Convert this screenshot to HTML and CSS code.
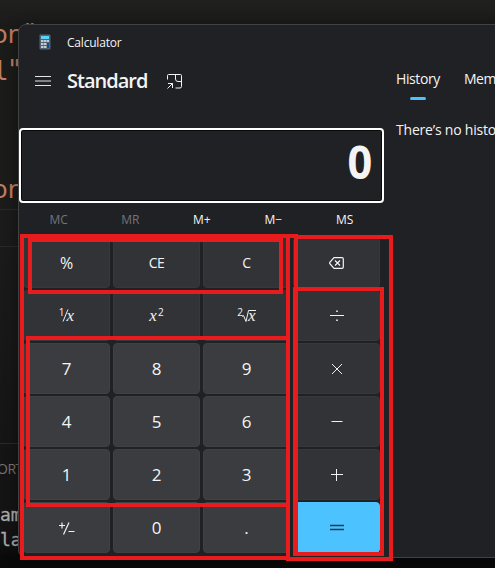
FILE: index.html
```html
<!DOCTYPE html>
<html lang="en">
<head>
<meta charset="utf-8">
<title>Calculator</title>
<link rel="stylesheet" href="styles.css">
</head>
<body>
<div class="desktop">
  <div class="editor">
    <span class="code s1">on<b>"</b></span>
    <span class="code s2">l<b>"</b></span>
    <span class="code s3">on</span>
    <span class="rule r1"></span>
    <span class="rule r2"></span>
    <span class="rule r3"></span>
    <span class="panel-tab">ORT</span>
    <span class="term t1">am</span>
    <span class="term t2">la</span>
  </div>
  <main class="window">
    <section class="calc">
      <header class="titlebar">
        <svg class="app-icon" width="12" height="16" viewBox="0 0 12 16"><rect x=".5" y=".5" width="11" height="15" rx="1" fill="#526473"/><rect x="2" y="2" width="8" height="3" fill="#55d5fa"/><g fill="#c5ccd1"><path d="M2 6h2.500v2H2zM5 6h2.500v2H5zM8 6h2v2H8zM2 9h2.500v2H2zM5 9h2.500v2H5zM2 12h2.500v2H2zM5 12h2.500v2H5z"/></g><path d="M8 9h2v5H8z" fill="#164c92"/></svg>
        <span>Calculator</span>
      </header>
      <div class="mode">
        <svg class="menu" width="16" height="12" viewBox="0 0 16 12" stroke="#e4e4e5"><path d="M0 1.500h16M0 6h16M0 10.500h16"/></svg>
        <h1>Standard</h1>
        <svg class="ontop" width="15" height="15" viewBox="0 0 15 15" fill="none" stroke="#f2f2f2"><path d="M.5 5.500V1.500Q.5.500 1.500.500H13.500Q14.500.500 14.500 1.500V12.500Q14.500 14 13 14H8.500M8.500.500V5Q8.500 7.500 11 7.500H14.500M.5 14.500 5.500 9.500M1 9.500H5.500V14"/></svg>
      </div>
      <div class="display"><span>0</span></div>
      <div class="memory"><span class="off">MC</span><span class="off">MR</span><span>M+</span><span>M−</span><span>MS</span></div>
      <div class="keys">
        <button class="pct">%</button>
        <button class="clear">CE</button>
        <button class="clear">C</button>
        <button><svg width="15" height="12" viewBox="0 0 15 12" fill="none" stroke="#f4f4f4" stroke-width="1.200"><path d="M5 .7H13Q14.300.7 14.300 2V10Q14.300 11.300 13 11.300H5L.7 6.500V5.500ZM6 3.500 11 8.500M11 3.500 6 8.500"/></svg></button>
        <button class="math"><span class="frac"><sup>1</sup><svg width="7" height="13" viewBox="0 0 7 13" stroke="#eee"><path d="M1 12.500 6 .5"/></svg><i>x</i></span></button>
        <button class="math"><span class="power"><i>x</i><sup>2</sup></span></button>
        <button class="math"><span class="root"><sup>2</sup><svg width="14" height="14" viewBox="0 0 14 14" fill="none" stroke="#eee"><path d="M0 7.500 1.500 6.500 4 12.500 6.500 1.500H14"/></svg><i>x</i></span></button>
        <button><svg width="14" height="12" viewBox="0 0 14 12" fill="#f2f2f2"><path d="M0 5h14v1H0zM6.200.5h1.600v1.600H6.200zM6.200 9.400h1.600v1.600H6.200z"/></svg></button>
        <button class="digit">7</button><button class="digit">8</button><button class="digit">9</button>
        <button><svg width="12" height="12" viewBox="0 0 12 12" stroke="#eee"><path d="M1 1 11 11M11 1 1 11"/></svg></button>
        <button class="digit">4</button><button class="digit">5</button><button class="digit">6</button>
        <button><svg width="12" height="12" viewBox="0 0 12 12" stroke="#f2f2f2"><path d="M.5 5.500H11.500"/></svg></button>
        <button class="digit">1</button><button class="digit">2</button><button class="digit">3</button>
        <button><svg width="12" height="12" viewBox="0 0 12 12" stroke="#f2f2f2"><path d="M0 5.500H12M5.500 0V12"/></svg></button>
        <button class="digit"><svg width="17" height="15" viewBox="0 0 17 15" fill="none" stroke="#f2f2f2" stroke-width="1.200"><path d="M1 4.500H7M4 1.500V7.500M5.500 13.500 11 1.500M10.500 10.500H16.500"/></svg></button>
        <button class="digit">0</button><button class="digit">.</button>
        <button class="equals"><svg width="14" height="7" viewBox="0 0 14 7" stroke="#173f53" stroke-width="1.300"><path d="M0 1.500H14M0 5.500H14"/></svg></button>
      </div>
    </section>
    <aside class="side">
      <nav class="tabs"><span class="active">History</span><span>Memory</span></nav>
      <p>There’s no history yet.</p>
    </aside>
  </main>
  <svg class="marks" width="495" height="568" viewBox="0 0 495 568" fill="none" stroke="#e81c1c" stroke-width="4">
    <path d="M298 236H22V558H288V236"/>
    <path d="M30 240H281V292H30Z"/>
    <path d="M28 338H288V505H28Z"/>
    <path d="M296 287V237H391V559H286"/>
    <path d="M295 289H382V554H295"/>
    <path d="M295.500 287V556" stroke-width="5"/>
  </svg>
</div>
</body>
</html>
```
FILE: styles.css
```css
* { box-sizing: border-box; }
body { margin: 0; }
.desktop {
  position: relative;
  width: 495px;
  height: 568px;
  overflow: hidden;
  padding: 24px 0 0 18px;
  background: linear-gradient(#202020 0, #1b1b1a 24px, #1b1b1b 220px, #151515 440px, #131313 540px, #090909 558px);
  font-family: "Open Sans", "Noto Sans", sans-serif;
  color: #f4f4f4;
}
.editor { position: absolute; inset: 0; white-space: pre; }
.editor > * { position: absolute; }
.code { color: #bf7c61; font: 26px/30px "Noto Sans", sans-serif; }
.code b { position: relative; font-weight: 400; }
.s1 { left: -8px; top: 18px; }
.s1 b { left: 1px; top: -2px; }
.s2 { left: -7px; top: 56px; font-family: "DejaVu Sans Mono", monospace; letter-spacing: -1px; }
.s2 b { left: -1px; top: -1px; }
.s3 { left: -8px; top: 173px; }
.rule { left: 0; width: 18px; height: 1px; background: #292929; }
.r1 { top: 209px; }
.r2 { top: 246px; }
.r3 { top: 443px; }
.panel-tab { left: -3px; top: 459px; color: #77736d; font-size: 14px; line-height: 19px; letter-spacing: -.5px; }
.term { left: 0; color: #aaa; font: 18px/24px "DejaVu Sans Mono", monospace; -webkit-text-stroke: .3px #aaa; }
.t1 { top: 503px; }
.t2 { top: 528px; }
.window {
  position: relative;
  display: flex;
  width: 600px;
  height: 534px;
  border: 1px solid #424244;
  border-radius: 8px;
  background: #202125;
  box-shadow: 0 2px 14px rgba(0, 0, 0, .4);
}
.calc { width: 365px; flex: none; }
.titlebar {
  display: flex;
  align-items: center;
  height: 34px;
  padding-left: 20px;
  gap: 16px;
  font-size: 12px;
  letter-spacing: -.2px;
}
.mode { display: flex; align-items: center; height: 44px; padding-left: 16px; }
h1 { margin: 0 0 0 16px; width: 100px; font-size: 20px; line-height: 28px; font-weight: 650; letter-spacing: -1px; white-space: nowrap; }
.display {
  display: flex;
  align-items: center;
  justify-content: flex-end;
  height: 75px;
  margin-top: 25px;
  padding-right: 10px;
  padding-bottom: 9px;
  border: 2px solid #fff;
  border-radius: 4px;
  box-shadow: inset 0 0 0 1px #08090b;
  font-size: 46px;
  font-weight: 700;
}
.display span { transform: scaleX(.94); transform-origin: right; }
.memory {
  display: grid;
  grid-template-columns: repeat(5, 71.500px);
  height: 34px;
  padding: 0 0 2px 4px;
  align-items: center;
  text-align: center;
  font-size: 12px;
}
.off { color: #737478; }
.keys {
  display: grid;
  grid-template-columns: repeat(4, 87px);
  grid-auto-rows: 51px;
  gap: 2px 3px;
  padding-left: 4px;
}
button {
  display: flex;
  align-items: center;
  justify-content: center;
  border: 1px solid #37383c;
  border-radius: 4px;
  padding: 0;
  background: #323337;
  color: #f4f4f4;
  font: 14px/20px "Open Sans", sans-serif;
}
button.digit { background: #3b3c40; border-color: #404145; font-size: 17px; padding-top: 1px; }
button.pct { font-size: 16px; }
button.clear { letter-spacing: -.5px; }
button.equals { background: #4cc2ff; border-color: #4cc2ff; }
.math span { display: flex; align-items: center; height: 20px; }
.math i { font: italic 17px/16px "Liberation Serif", serif; }
.math sup { align-self: flex-start; font-size: 10px; line-height: 12px; }
.frac sup { margin-right: -1px; }
.frac svg { margin: 0 -2px 0 -2px; }
.power sup { margin-left: 1px; }
.root svg { margin-left: -1px; margin-right: -8px; }
.side { padding: 42px 0 0 12px; font-size: 14px; white-space: nowrap; }
.tabs { display: flex; gap: 24px; line-height: 24px; letter-spacing: -.4px; }
.active { position: relative; }
.active::after {
  content: "";
  position: absolute;
  left: 14px;
  bottom: -9px;
  width: 16px;
  height: 3px;
  border-radius: 2px;
  background: #4cc2ff;
}
.side p { margin: 29px 0 0; font-size: 14px; line-height: 20px; letter-spacing: -.2px; }
.marks { position: absolute; left: 0; top: 0; pointer-events: none; }
```
